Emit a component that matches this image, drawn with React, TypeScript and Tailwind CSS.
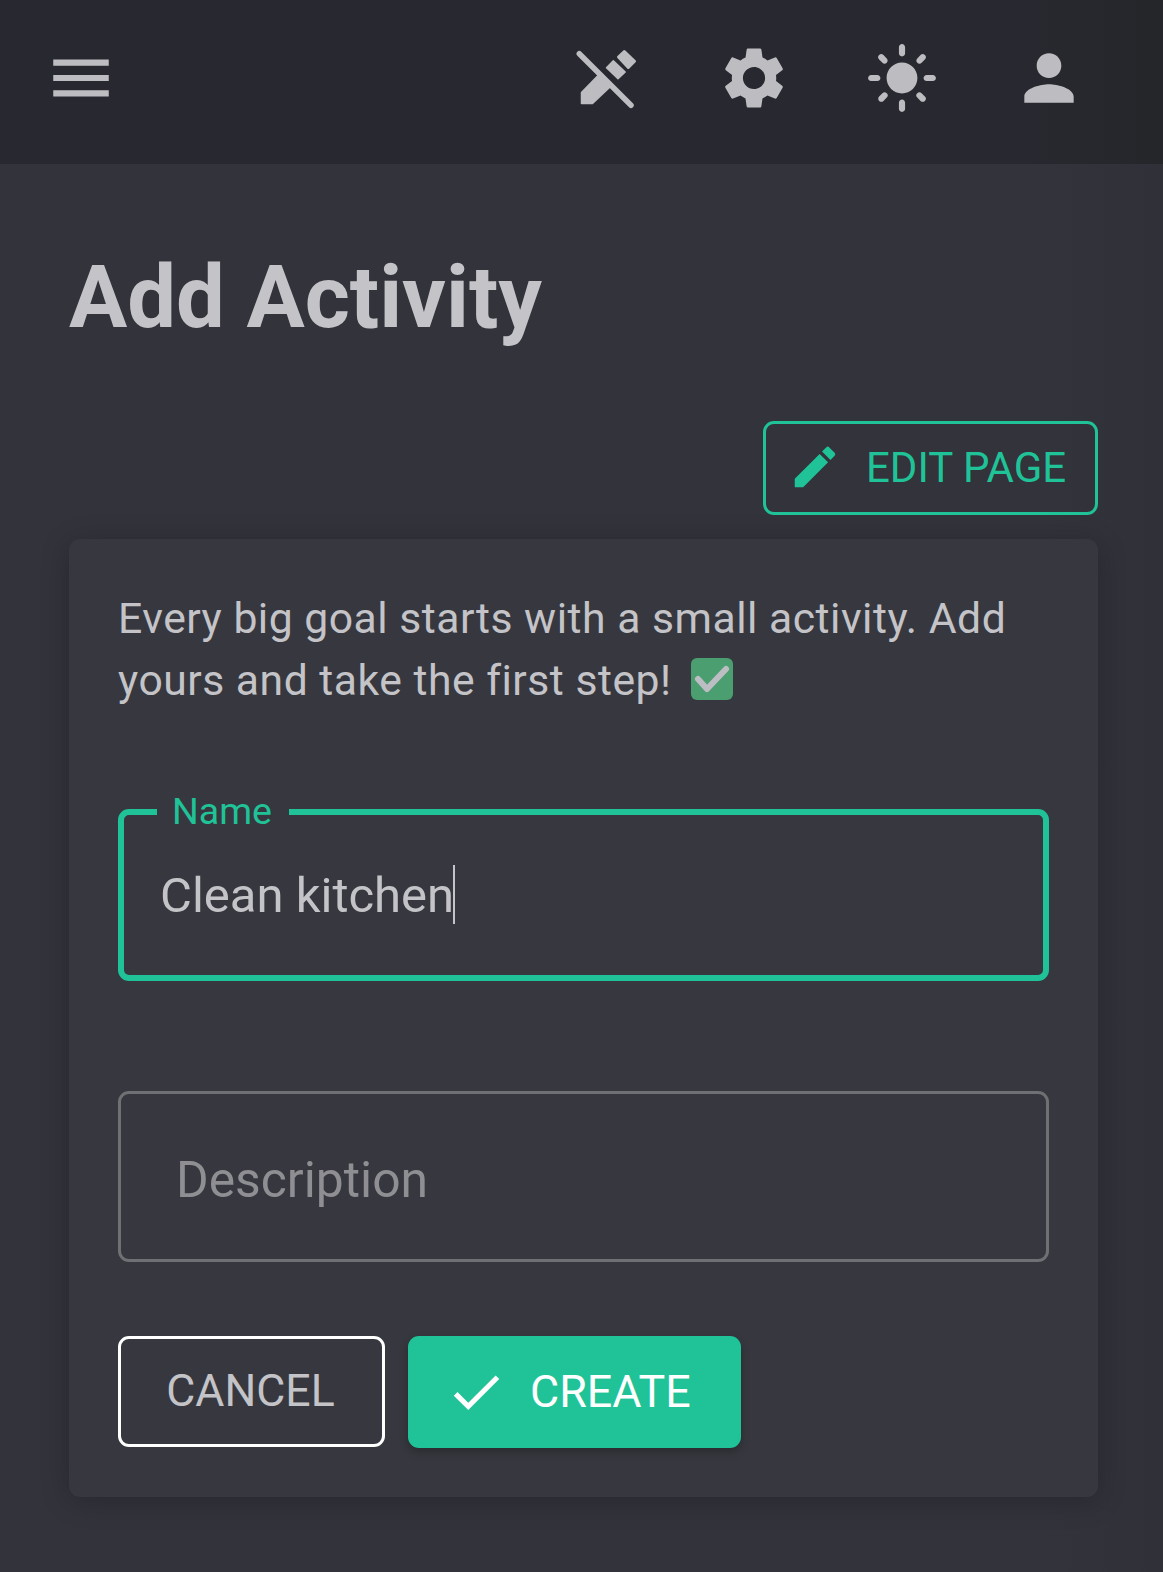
import React from "react";
import { MdMenu, MdSettings, MdLightMode, MdPerson, MdEdit, MdCheck } from "react-icons/md";

const HeaderIcon = ({ children, className = "" }: { children: React.ReactNode; className?: string }) => (
  <div className={`w-[74px] h-[74px] flex items-center justify-center text-[#bdbdc1] text-[74px] ${className}`}>{children}</div>
);

const EditOffIcon = () => (
  <svg viewBox="-1 -1 74 74" className="w-[74px] h-[74px]" fill="currentColor" stroke="currentColor" strokeLinejoin="round">
    <path d="M9.3 11.7 L61 63.3" strokeWidth="5.5" strokeLinecap="round" fill="none" />
    <path d="M28.3 33.3 L11.5 50.5 L11.5 61.5 L22.5 61.5 L40 45 Z" strokeWidth="1.5" />
    <path d="M36.5 25.7 L43.3 18.8 L55.2 30 L48 36.8 Z" strokeWidth="1.5" />
    <path d="M54.3 9.5 L64.5 19.3 L58.3 25.5 L48.5 15 Z" strokeWidth="3" />
  </svg>
);

const CheckEmoji = () => (
  <svg viewBox="0 0 42 42" className="inline-block w-[42px] h-[42px] ml-[19px] align-[-5px]">
    <rect x="0" y="0" width="42" height="42" rx="6" fill="#4b9e70" />
    <path d="M7 21 L16 31 L35 11" fill="none" stroke="#bdbdc4" strokeWidth="6" strokeLinecap="round" strokeLinejoin="round" />
  </svg>
);

export default function App() {
  return (
    <div className="min-h-[1572px] bg-gradient-to-r from-[#32333b] from-90% to-[#2f3038] font-['Roboto',sans-serif] text-[#c4c4c8]">
      <header className="h-[164px] bg-gradient-to-r from-[#282930] from-88% to-[#25262a] flex items-center justify-between pl-[44px] pr-[77px] pb-[8px]">
        <div className="text-[#bdbdc1] text-[74px]"><MdMenu /></div>
        <div className="flex items-center gap-[74px]">
          <HeaderIcon><EditOffIcon /></HeaderIcon>
          <HeaderIcon><MdSettings /></HeaderIcon>
          <HeaderIcon><MdLightMode /></HeaderIcon>
          <HeaderIcon className="-ml-[1px]"><MdPerson /></HeaderIcon>
        </div>
      </header>

      <main className="pr-[65px] pl-[69px]">
        <h1 className="pt-[86px] text-[86.7px] leading-[96px] font-bold">Add Activity</h1>

        <div className="flex justify-end mt-[75px]">
          <button className="h-[94px] w-[335px] border-[3px] border-[#1fc397] rounded-[11px] flex items-center pl-[22px] pb-[2px] text-[#1fc397] text-[42px]">
            <MdEdit className="text-[54px] shrink-0" />
            <span className="ml-[24px]">EDIT PAGE</span>
          </button>
        </div>

        <section className="mt-[24px] h-[958px] bg-[#37383f] rounded-[11px] shadow-[0_4px_30px_rgba(0,0,0,0.2)] p-[49px]">
          <p className="text-[42.7px] leading-[62px] tracking-[0.5px] mt-[-1px]">
            Every big goal starts with a small activity. Add yours and take the first step!
            <CheckEmoji />
          </p>

          <div className="relative mt-[98px] h-[172px] border-[6px] border-[#1fc397] rounded-[11px] flex items-center pl-[36px]">
            <span className="absolute left-[33px] top-[-25px] bg-[#37383f] pl-[15px] pr-[17px] text-[#1fc397] text-[37.5px] leading-[42px]">Name</span>
            <span className="text-[49px] leading-[56px] text-[#c4c4c8] pt-[2px] -mr-[1px]">Clean kitchen</span>
            <span className="w-[1.5px] h-[59px] bg-[#c4c4c8] -mt-[1px]" />
          </div>

          <div className="mt-[110px] h-[171px] border-[3px] border-[#6f7074] rounded-[11px] flex items-center pl-[55px] pt-[8px] text-[49.8px] text-[#8e8e93]">
            Description
          </div>

          <div className="flex gap-[23px] mt-[74px]">
            <button className="w-[267px] h-[111px] border-[3px] border-white rounded-[11px] pr-[2px] text-[44.6px] text-[#c4c4c8]">CANCEL</button>
            <button className="w-[333px] h-[112px] bg-[#1fc397] rounded-[11px] shadow-[0_4px_8px_rgba(0,0,0,0.25)] flex items-center pl-[37px] text-white text-[44.8px]">
              <MdCheck className="text-[62px] shrink-0" />
              <span className="ml-[23px]">CREATE</span>
            </button>
          </div>
        </section>
      </main>
    </div>
  );
}
